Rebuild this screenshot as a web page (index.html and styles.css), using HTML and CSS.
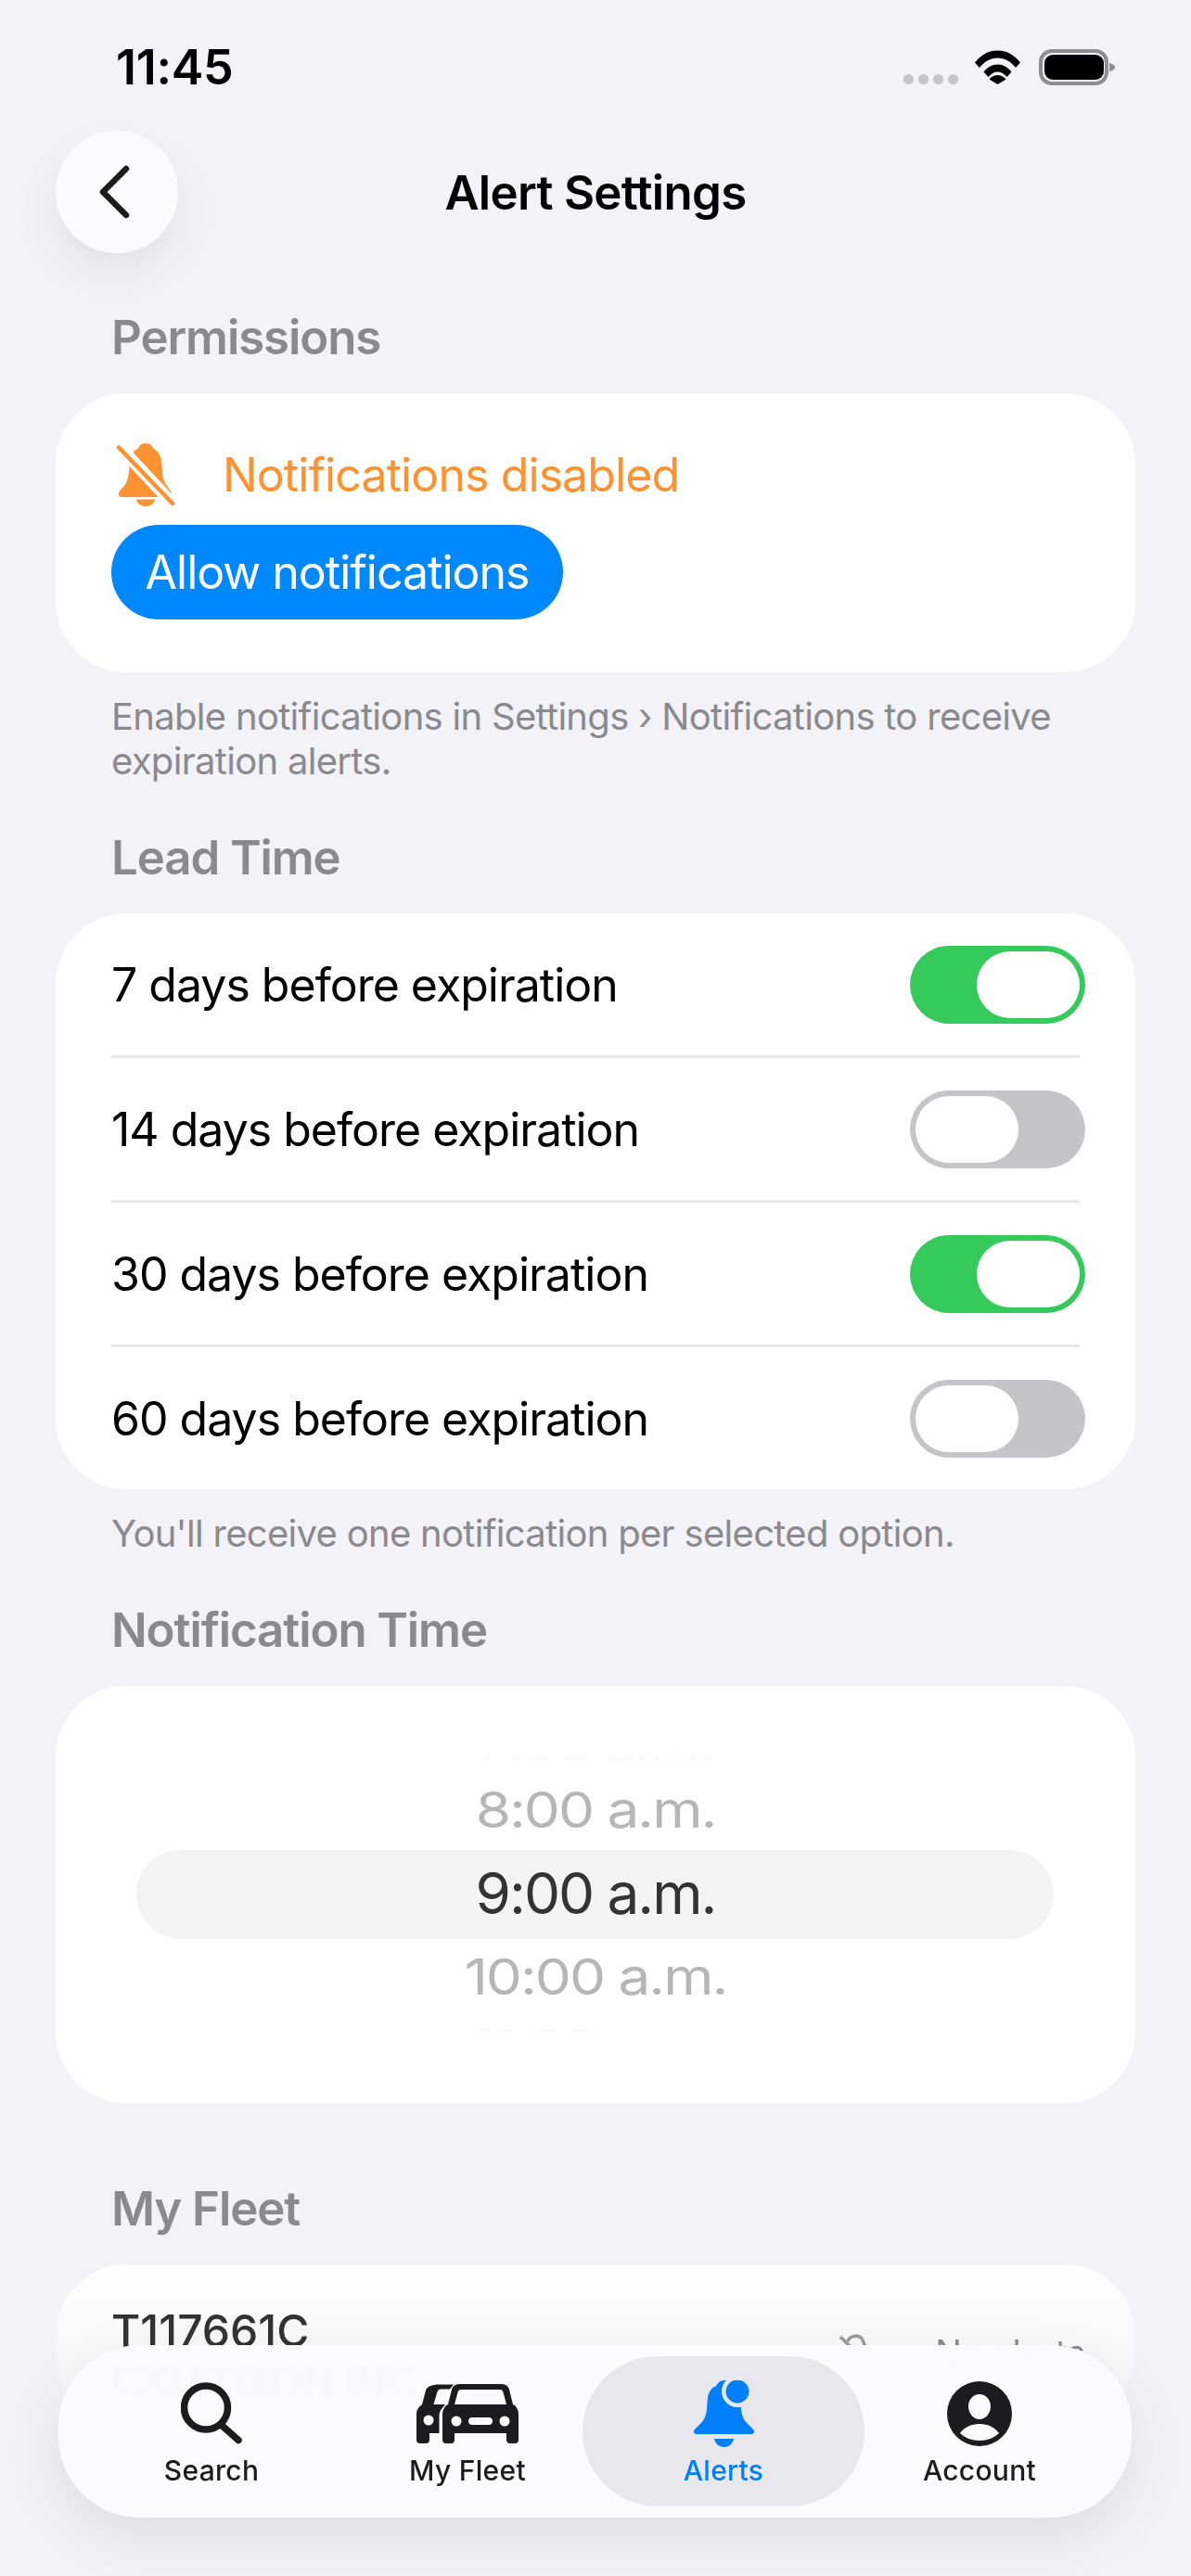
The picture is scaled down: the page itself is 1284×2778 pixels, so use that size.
FILE: index.html
```html
<!DOCTYPE html>
<html lang="en">
<head>
    <meta charset="UTF-8">
    <meta name="viewport" content="width=device-width, initial-scale=1.0">
    <title>Alert Settings</title>
    <link rel="stylesheet" href="styles.css">
</head>
<body>
    <div class="screen">
        <div class="status-bar">
            <span class="clock">11:45</span>
            <div class="status-icons">
                <div class="signal"><i></i><i></i><i></i><i></i></div>
                <svg class="wifi" viewBox="0 0 49 37">
                    <path d="M0 13.5C6.5 5 15 0.500 24.500 0.500S42.500 5 49 13.500L44 19C38.500 12 32 8.500 24.500 8.500S10.500 12 5 19Z"/>
                    <path d="M9.500 23.500C13.500 18.500 18.500 15.500 24.500 15.500S35.500 18.500 39.500 23.500L34.500 29C31.500 25.500 28.500 23.500 24.500 23.500S17.500 25.500 14.500 29Z"/>
                    <path d="M24.500 37L15.500 31.500C18 28.500 21 27 24.500 27S31 28.500 33.500 31.500Z"/>
                </svg>
                <svg class="battery" viewBox="0 0 82 39">
                    <rect x="2" y="2" width="71" height="35" rx="12" fill="none" stroke="#8e8e90" stroke-width="4"/>
                    <rect x="6" y="6" width="64" height="27" rx="9"/>
                    <path d="M76 15C80 16 82 17.500 82 19.500S80 23 76 24Z" fill="#8e8e90"/>
                </svg>
            </div>
        </div>

        <div class="page">
            <header class="top-bar">
                <button class="back-btn" aria-label="Back">
                    <svg viewBox="0 0 34 58"><path d="M30 4L5 29L30 54"/></svg>
                </button>
                <h1>Alert Settings</h1>
            </header>

            <h2 class="section-title first">Permissions</h2>
            <section class="card permission-card">
                <div class="permission-row">
                    <svg class="bell-off" viewBox="0 0 64 68">
                        <path d="M32 0C37 0 39 3 40.500 6C47 9 49 15 49.500 24C50 34 50.500 40 55 46C58 50 60 52 60 55C60 57 59 58 57 58H6C4 58 3 57 3 55C3 52 5 50 9 46C13 40 14 34 14.500 24C15 15 17 9 23.500 6C25 3 27 0 32 0Z"/>
                        <path d="M22 60.500H42C41.500 65 37 68 32 68S22.500 65 22 60.500Z"/>
                        <path class="slash-gap" d="M4 4L60 64"/>
                        <path class="slash" d="M3 4.500L61 65"/>
                    </svg>
                    <span>Notifications disabled</span>
                </div>
                <button class="allow-btn">Allow notifications</button>
            </section>
            <p class="hint">Enable notifications in Settings › Notifications to receive expiration alerts.</p>

            <h2 class="section-title">Lead Time</h2>
            <section class="card">
                <div class="lead-row"><span>7 days before expiration</span><div class="toggle on"><i></i></div></div>
                <div class="lead-row"><span>14 days before expiration</span><div class="toggle"><i></i></div></div>
                <div class="lead-row"><span>30 days before expiration</span><div class="toggle on"><i></i></div></div>
                <div class="lead-row"><span>60 days before expiration</span><div class="toggle"><i></i></div></div>
            </section>
            <p class="hint">You'll receive one notification per selected option.</p>

            <h2 class="section-title">Notification Time</h2>
            <section class="card time-card">
                <div class="time-highlight"></div>
                <div class="wheel">
                    <div class="wheel-row edge-top">7:00 a.m.</div>
                    <div class="wheel-row near">8:00 a.m.</div>
                    <div class="wheel-row current">9:00 a.m.</div>
                    <div class="wheel-row near">10:00 a.m.</div>
                    <div class="wheel-row edge-bottom">11:00 a.m.</div>
                </div>
            </section>

            <h2 class="section-title fleet-title">My Fleet</h2>
            <section class="card fleet-card">
                <div class="fleet-names">
                    <div class="plate">T117661C</div>
                    <div class="company">CXI FOXON INC</div>
                </div>
                <div class="fleet-status">
                    <svg viewBox="0 0 34 34"><path d="M2 4L30 32M10 9C12 3 21 1 25 6C28 10 28 15 31 20"/></svg>
                    <span>No alerts</span>
                </div>
            </section>
        </div>

        <nav class="tab-bar">
            <a class="tab">
                <svg class="icon-search" viewBox="0 0 67 67"><circle cx="27" cy="27" r="23.500"/><path d="M44 46L62 62"/></svg>
                <span>Search</span>
            </a>
            <a class="tab">
                <svg class="icon-fleet" viewBox="0 0 110 64">
                    <path fill-rule="evenodd" d="M47 0H91C96 0 99 2 100 6L104 22C108 24 110 28 110 33V60C110 63 108 64 106 64H101C98 64 97 62 97 60V53H41V60C41 62 40 64 37 64H32C30 64 28 63 28 60V33C28 28 30 24 34 22L38 6C39 2 42 0 47 0ZM48 6C46 6 45 7 44.500 9L41 22H97L93.500 9C93 7 92 6 90 6ZM43 34.500A5.500 5.500 0 1 0 43 45.500A5.500 5.500 0 1 0 43 34.500ZM95 34.500A5.500 5.500 0 1 0 95 45.500A5.500 5.500 0 1 0 95 34.500ZM60 36C57.500 36 56 37.500 56 40S57.500 44 60 44H78C80.500 44 82 42.500 82 40S80.500 36 78 36Z"/>
                    <path fill-rule="evenodd" d="M25 0.500H40L36 5.500H26C24 5.500 23 7 22 9.500L18.500 22H31L27 27C25.500 29 24.500 31 24.500 34V53H14V60C14 62 13 64 10 64H4C2 64 0 63 0 60V33C0 28 2 25 6 22L10 7C11 3 16 0.500 25 0.500ZM13 33.500A5.500 5.500 0 1 0 13 44.500A5.500 5.500 0 1 0 13 33.500Z"/>
                </svg>
                <span>My Fleet</span>
            </a>
            <a class="tab active">
                <svg class="icon-alerts" viewBox="0 0 65 72">
                    <path d="M33 0C38 0 40 3 41 6C48 9 50 15 50.500 24C51 34 51.500 41 59 48C62 51 65 53 65 55C65 57 64 58 62 58H3C1 58 0 57 0 55C0 53 3 51 6 48C13.500 41 14 34 14.500 24C15 15 17 9 24 6C26 3 28 0 33 0Z"/>
                    <path d="M22 63H43C42 68 38 72 32.500 72S23 68 22 63Z"/>
                    <circle class="badge-ring" cx="47" cy="12" r="17"/>
                    <circle cx="47" cy="12" r="12.500"/>
                </svg>
                <span>Alerts</span>
            </a>
            <a class="tab">
                <svg class="icon-account" viewBox="0 0 70 70">
                    <path fill-rule="evenodd" d="M35 0A35 35 0 1 0 35 70A35 35 0 1 0 35 0ZM35 14C42 14 47 20 47 27S42 41 35 41S23 34 23 27S28 14 35 14ZM35 46C44 46 52 50 56 56C51 61 43 64 35 64S19 61 14 56C18 50 26 46 35 46Z"/>
                </svg>
                <span>Account</span>
            </a>
        </nav>
    </div>
</body>
</html>
```

FILE: styles.css
```css
* {
    box-sizing: border-box;
}
body {
    margin: 0;
    font-family: Inter, "Liberation Sans", sans-serif;
    background-color: #f2f2f7;
}
.screen {
    position: relative;
    width: 1284px;
    height: 2778px;
    overflow: hidden;
    background-color: #f2f2f7;
}
.status-bar {
    height: 141px;
    padding: 49px 82px 0 125px;
    display: flex;
    justify-content: space-between;
    align-items: flex-start;
}
.clock {
    font-size: 52px;
    font-weight: 600;
    line-height: 48px;
    color: #000;
    letter-spacing: -0.3px;
}
.status-icons {
    display: flex;
    align-items: flex-start;
    margin-top: 4px;
}
.signal {
    display: flex;
    gap: 5px;
    margin-top: 27px;
    margin-right: 18px;
}
.signal i {
    width: 11px;
    height: 11px;
    border-radius: 50%;
    background-color: #c5c5ca;
}
.wifi {
    width: 49px;
    height: 37px;
    margin-top: 1px;
    margin-right: 20px;
}
.battery {
    width: 82px;
    height: 39px;
}
.page {
    padding: 0 60px;
}
.top-bar {
    position: relative;
    height: 132px;
    display: flex;
    align-items: center;
    justify-content: center;
}
.top-bar h1 {
    margin: 0;
    font-size: 51px;
    font-weight: 600;
    letter-spacing: -0.7px;
    color: #000;
}
.back-btn {
    position: absolute;
    left: 0;
    top: 0;
    width: 132px;
    height: 132px;
    padding: 0;
    border: none;
    border-radius: 50%;
    background-color: #fbfbfe;
    box-shadow: 0 22px 50px rgba(0, 0, 0, 0.07);
    display: flex;
    align-items: center;
    justify-content: center;
}
.back-btn svg {
    width: 34px;
    height: 58px;
    margin-right: 6px;
}
.back-btn path {
    fill: none;
    stroke: #1c1c1e;
    stroke-width: 6.5;
    stroke-linecap: round;
    stroke-linejoin: round;
}
.section-title {
    margin: 50px 0 30px 60px;
    font-size: 51px;
    line-height: 60px;
    font-weight: 600;
    letter-spacing: -1.1px;
    color: #8a8a8e;
}
.section-title.first {
    margin-top: 61px;
}
.section-title.fleet-title {
    margin-top: 84px;
}
.card {
    background-color: #fff;
    border-radius: 76px;
}
.permission-card {
    height: 301px;
    padding: 53px 60px 0;
}
.permission-row {
    height: 70px;
    display: flex;
    align-items: center;
    font-size: 50px;
    letter-spacing: -0.9px;
    color: #ff9230;
}
.bell-off {
    width: 64px;
    height: 68px;
    margin: 0 51px 0 5px;
    fill: #ff9230;
}
.slash-gap {
    fill: none;
    stroke: #fff;
    stroke-width: 13;
}
.slash {
    fill: none;
    stroke: #ff9230;
    stroke-width: 4.500;
    stroke-linecap: round;
}
.allow-btn {
    display: block;
    width: 487px;
    height: 102px;
    margin-top: 19px;
    padding: 0;
    border: none;
    border-radius: 51px;
    background-color: #0088ff;
    color: #fff;
    font-family: inherit;
    font-size: 50px;
    letter-spacing: -1px;
}
.hint {
    margin: 24px 60px 0;
    font-size: 40px;
    line-height: 48px;
    letter-spacing: -0.7px;
    color: #8a8a8e;
}
.lead-row {
    height: 156px;
    margin: 0 60px;
    border-bottom: 3px solid #e8e8ea;
    display: flex;
    align-items: center;
    justify-content: space-between;
    font-size: 50px;
    letter-spacing: -1px;
    color: #000;
}
.lead-row:last-child {
    height: 153px;
    border-bottom: none;
}
.toggle {
    width: 189px;
    height: 84px;
    margin-right: -6px;
    padding: 6px;
    border-radius: 42px;
    background-color: #c5c5c8;
    display: flex;
}
.toggle.on {
    background-color: #36c95c;
    justify-content: flex-end;
}
.toggle i {
    width: 111px;
    height: 72px;
    border-radius: 36px;
    background-color: #fff;
}
.time-card {
    position: relative;
    height: 450px;
    padding-top: 72px;
}
.time-highlight {
    position: absolute;
    left: 87px;
    right: 88px;
    top: 177px;
    height: 96px;
    border-radius: 48px;
    background-color: #f3f3f4;
}
.wheel {
    position: relative;
    height: 306px;
    overflow: hidden;
    -webkit-mask-image: linear-gradient(transparent, #000 14%, #000 86%, transparent);
    mask-image: linear-gradient(transparent, #000 14%, #000 86%, transparent);
}
.wheel-row {
    height: 90px;
    line-height: 90px;
    text-align: center;
    font-size: 62px;
    letter-spacing: -2px;
    white-space: nowrap;
}
.wheel-row.edge-top {
    margin-top: -73px;
    color: #d8d8d8;
    transform: translateY(22px) scaleY(0.62);
}
.wheel-row.near {
    color: #b6b6b6;
    transform: scaleY(0.87);
}
.wheel-row.current {
    color: #333;
}
.wheel-row.edge-bottom {
    color: #d8d8d8;
    transform: translateY(-20px) scaleY(0.62);
}
.fleet-card {
    height: 170px;
    padding: 44px 54px 0 60px;
    display: flex;
    justify-content: space-between;
    background: linear-gradient(#fff, #f7f7f7 60%);
    -webkit-mask-image: linear-gradient(#000 75%, transparent);
    mask-image: linear-gradient(#000 75%, transparent);
}
.plate {
    font-size: 48px;
    line-height: 56px;
    font-weight: 500;
    color: #333;
}
.company {
    font-size: 44px;
    line-height: 52px;
    color: #222;
}
.fleet-status {
    display: flex;
    align-items: flex-start;
    gap: 70px;
    padding-top: 28px;
    font-size: 38px;
    line-height: 46px;
    color: #8a8a8e;
}
.fleet-status svg {
    width: 34px;
    height: 34px;
    margin-top: 2px;
    fill: none;
    stroke: #9a9a9a;
    stroke-width: 3.500;
}
.tab-bar {
    position: absolute;
    left: 63px;
    top: 2529px;
    width: 1157px;
    height: 186px;
    padding: 12px 25px 12px 27px;
    border-radius: 88px;
    display: grid;
    grid-template-columns: repeat(4, 276px);
    background-color: rgba(251, 251, 254, 0.97);
    -webkit-backdrop-filter: blur(3px);
    backdrop-filter: blur(3px);
    box-shadow: 0 22px 64px rgba(0, 0, 0, 0.09);
}
.tab {
    position: relative;
    height: 162px;
    display: flex;
    flex-direction: column;
    align-items: center;
    padding-top: 26px;
    color: #1c1c1e;
    font-size: 30px;
    font-weight: 500;
    letter-spacing: 0.3px;
}
.tab svg {
    height: 72px;
    flex-shrink: 0;
    fill: currentColor;
}
.tab span {
    margin-top: 7px;
    line-height: 36px;
}
.tab.active {
    margin: 0 -14px;
    border-radius: 81px;
    background-color: #e8e8ec;
    color: #007ffb;
}
.icon-search {
    width: 67px;
}
.icon-search circle,
.icon-search path {
    fill: none;
    stroke: currentColor;
    stroke-width: 7.500;
    stroke-linecap: round;
}
.icon-fleet {
    width: 110px;
}
.icon-alerts {
    width: 65px;
}
.badge-ring {
    fill: #e8e8ec;
}
.icon-account {
    width: 70px;
}
```
